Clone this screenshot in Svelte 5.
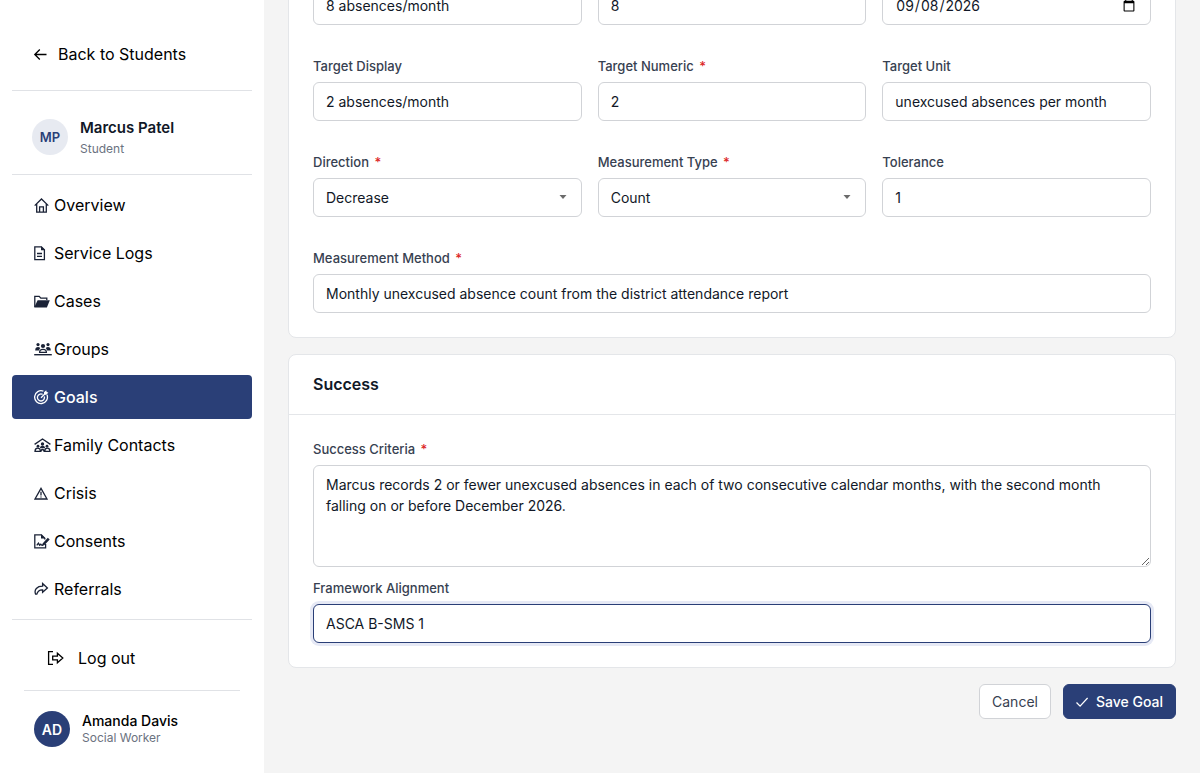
<script lang="ts">
	let active = 'goals';

	const navItems = [
		{ id: 'overview', label: 'Overview' },
		{ id: 'logs', label: 'Service Logs' },
		{ id: 'cases', label: 'Cases' },
		{ id: 'groups', label: 'Groups' },
		{ id: 'goals', label: 'Goals' },
		{ id: 'family', label: 'Family Contacts' },
		{ id: 'crisis', label: 'Crisis' },
		{ id: 'consents', label: 'Consents' },
		{ id: 'referrals', label: 'Referrals' }
	];

	let goal = {
		baselineDisplay: '8 absences/month',
		baselineNumeric: '8',
		baselineDate: '2026-09-08',
		targetDisplay: '2 absences/month',
		targetNumeric: '2',
		targetUnit: 'unexcused absences per month',
		direction: 'Decrease',
		measurementType: 'Count',
		tolerance: '1',
		method: 'Monthly unexcused absence count from the district attendance report',
		criteria:
			'Marcus records 2 or fewer unexcused absences in each of two consecutive calendar months, with the second month falling on or before December 2026.',
		framework: 'ASCA B-SMS 1'
	};
</script>

<div class="layout">
	<aside class="sidebar">
		<a class="back" href="#students">
			<svg width="14" height="14" viewBox="0 0 14 14" class="line">
				<path d="M13.5 7.5H2M6.8 2.5l-5 5 5 5" />
			</svg>
			Back to Students
		</a>

		<div class="student">
			<span class="avatar light">MP</span>
			<div>
				<div class="student-name">Marcus Patel</div>
				<div class="student-role">Student</div>
			</div>
		</div>

		<nav>
			{#each navItems as item (item.id)}
				<a href="#{item.id}" class="nav-item" class:active={active === item.id}>
					<svg width="18" height="16" viewBox="0 0 18 16" class="line">
						{#if item.id === 'overview'}
							<path d="M.7 8.6 7.5 2l6.8 6.6M2.7 7v8.2h9.6V7M5.6 15V9.8h3.8V15" />
						{:else if item.id === 'logs'}
							<path d="M.8 1.8h6.6l3 3v9.8H.8zM3 8.5h5M3 11.3h5" />
							<path class="solid" d="M7 1.2v4h4z" />
						{:else if item.id === 'cases'}
							<path d="M.8 14V3.3h4.4l1.6 1.8h6v2" />
							<path class="solid" d="M3.6 7.2h12.2L12.9 14.6H.2z" />
						{:else if item.id === 'groups'}
							<g class="solid">
								<circle cx="4" cy="3.6" r="1.6" />
								<circle cx="14" cy="3.6" r="1.6" />
								<circle cx="9" cy="5" r="2.1" />
								<path d="M1.2 9.4c0-2.4 1.2-3.4 2.8-3.4 1 0 1.7.3 2.2.9L4.8 9.4zM16.8 9.4c0-2.4-1.2-3.4-2.8-3.4-1 0-1.7.3-2.2.9l1.4 2.5z" />
								<path d="M.2 13h17.6v1.4H.2z" />
							</g>
							<path d="M5.6 11.4c0-2.4 1.4-3 3.4-3s3.4.6 3.4 3z" />
						{:else if item.id === 'goals'}
							<path d="M9.4 2.2A6.4 6.4 0 1 0 13 5.8M8.6 5.4a3.5 3.5 0 1 0 1.7 2.1M7 8.7l4-4" />
							<path class="solid" d="M10 5.1V3.3l2.2-2 .5 1.7 1.7.5-2 2.2h-1.8z" />
						{:else if item.id === 'family'}
							<path d="M.6 7.4 8.5 2l7.9 5.4" />
							<g class="solid">
								<circle cx="8.5" cy="7" r="1.7" />
								<circle cx="4" cy="9.2" r="1.4" />
								<circle cx="13" cy="9.2" r="1.4" />
								<path d="M5.9 11.2c.2-1.7 1.2-2.4 2.6-2.4s2.4.7 2.6 2.4z" />
							</g>
							<path d="M1 14.4c0-2.4 1-3.2 2.7-3.2s2.6.8 2.6 3.2zM10.7 14.4c0-2.4 1-3.2 2.6-3.2s2.7.8 2.7 3.2zM7 14.8c0-1.6.4-2.3 1.5-2.3s1.5.7 1.5 2.3" />
						{:else if item.id === 'crisis'}
							<path d="M7 3.4 13 14H1zM7 6.8v3.6M7 11.4v1.2" />
						{:else if item.id === 'consents'}
							<path d="M11.6 11v3.8H.8V1.8h6.6l3.4 3.4v1.2M2.8 12.4l1.6-2.2 1.2 2 1.2-1 .8.9h1.6" />
							<path class="solid" d="M7 1.2v4.4h4.4zM13.8 4.8l1.9 1.7-5.2 5.6-2.5.8.6-2.5z" />
						{:else}
							<path d="M8.6 2.6 13.4 7l-4.8 4.2V8.8C5.6 8.6 3.8 9.6 2.8 13.2H1.6C-.2 8.6 3 5.2 8.6 5.2z" />
						{/if}
					</svg>
					{item.label}
				</a>
			{/each}
		</nav>

		<div class="footer">
			<button type="button" class="logout">
				<svg width="18" height="16" viewBox="0 0 18 16" class="line">
					<path d="M6 1.6H1.6v12.8H6M5.7 6.2h4.7V3.3L15.8 8l-5.4 4.7V9.8H5.7z" />
				</svg>
				Log out
			</button>
			<div class="user">
				<span class="avatar dark">AD</span>
				<div>
					<div class="user-name">Amanda Davis</div>
					<div class="user-role">Social Worker</div>
				</div>
			</div>
		</div>
	</aside>

	<!-- column-reverse keeps the scroll position at the end of the form -->
	<main>
		<form on:submit|preventDefault>
			<section class="card">
				<div class="card-body measure">
					<div class="field">
						<label for="baseline-display">Baseline Display</label>
						<input id="baseline-display" type="text" bind:value={goal.baselineDisplay} />
					</div>
					<div class="field">
						<label for="baseline-numeric">Baseline Numeric <span class="req">*</span></label>
						<input id="baseline-numeric" type="text" bind:value={goal.baselineNumeric} />
					</div>
					<div class="field">
						<label for="baseline-date">Baseline Date</label>
						<input id="baseline-date" type="date" bind:value={goal.baselineDate} />
					</div>
					<div class="field">
						<label for="target-display">Target Display</label>
						<input id="target-display" type="text" bind:value={goal.targetDisplay} />
					</div>
					<div class="field">
						<label for="target-numeric">Target Numeric <span class="req">*</span></label>
						<input id="target-numeric" type="text" bind:value={goal.targetNumeric} />
					</div>
					<div class="field">
						<label for="target-unit">Target Unit</label>
						<input id="target-unit" type="text" bind:value={goal.targetUnit} />
					</div>
					<div class="field">
						<label for="direction">Direction <span class="req">*</span></label>
						<div class="select">
							<select id="direction" bind:value={goal.direction}>
								<option>Decrease</option>
								<option>Increase</option>
							</select>
							<svg width="8" height="4" viewBox="0 0 8 4"><path d="M.5 0h7L4 4z" /></svg>
						</div>
					</div>
					<div class="field">
						<label for="type">Measurement Type <span class="req">*</span></label>
						<div class="select">
							<select id="type" bind:value={goal.measurementType}>
								<option>Count</option>
								<option>Percentage</option>
							</select>
							<svg width="8" height="4" viewBox="0 0 8 4"><path d="M.5 0h7L4 4z" /></svg>
						</div>
					</div>
					<div class="field">
						<label for="tolerance">Tolerance</label>
						<input id="tolerance" type="text" bind:value={goal.tolerance} />
					</div>
					<div class="field wide">
						<label for="method">Measurement Method <span class="req">*</span></label>
						<input id="method" type="text" bind:value={goal.method} />
					</div>
				</div>
			</section>

			<section class="card">
				<h2>Success</h2>
				<div class="card-body success">
					<div class="field">
						<label for="criteria">Success Criteria <span class="req">*</span></label>
						<textarea id="criteria" rows="4" bind:value={goal.criteria}></textarea>
					</div>
					<div class="field">
						<label for="framework">Framework Alignment</label>
						<input id="framework" class="current" type="text" bind:value={goal.framework} />
					</div>
				</div>
			</section>

			<div class="actions">
				<button type="button" class="btn">Cancel</button>
				<button type="submit" class="btn primary">
					<svg width="12" height="12" viewBox="0 0 12 12" class="line">
						<path d="m.5 6.5 3.6 3.6L11.6 2" />
					</svg>
					Save Goal
				</button>
			</div>
		</form>
	</main>
</div>

<style>
	:global(body) {
		margin: 0;
		background: #f4f4f4;
	}
	.layout {
		display: flex;
		height: 100vh;
		font-family: Inter, 'Liberation Sans', sans-serif;
		font-size: 14px;
		color: #111827;
	}
	.layout * {
		box-sizing: border-box;
	}
	svg {
		flex: none;
		fill: currentColor;
	}
	.line {
		fill: none;
		stroke: currentColor;
		stroke-width: 1.3;
	}
	.solid {
		fill: currentColor;
		stroke: none;
	}
	.sidebar {
		flex: none;
		display: flex;
		flex-direction: column;
		width: 264px;
		padding: 18px 12px 0;
		background: #fff;
	}
	.back {
		display: flex;
		align-items: center;
		gap: 11px;
		height: 73px;
		padding-left: 21px;
		border-bottom: 1px solid #e0e2e6;
		font-size: 16px;
		color: #000;
		text-decoration: none;
	}
	.student {
		display: flex;
		align-items: center;
		gap: 12px;
		height: 84px;
		padding: 8px 20px 0;
		border-bottom: 1px solid #e0e2e6;
	}
	.avatar {
		display: flex;
		align-items: center;
		justify-content: center;
		width: 36px;
		height: 36px;
		border-radius: 50%;
		font-weight: 600;
	}
	.avatar.light {
		background: #e7eaf1;
		color: #2a3f77;
		font-size: 13px;
	}
	.avatar.dark {
		background: #2a3f77;
		color: #fff;
	}
	.student-name {
		padding-top: 2px;
		font-size: 15px;
		font-weight: 600;
		line-height: 22px;
	}
	.student-role {
		font-size: 12px;
		line-height: 20px;
		color: #6b7280;
	}
	nav {
		display: flex;
		flex-direction: column;
		gap: 4px;
		padding: 8px 0;
		border-bottom: 1px solid #e0e2e6;
	}
	.nav-item {
		display: flex;
		align-items: center;
		gap: 2px;
		height: 44px;
		padding-left: 22px;
		border-radius: 4px;
		font-size: 16px;
		color: #000;
		text-decoration: none;
	}
	.nav-item svg {
		color: #1a2236;
	}
	.nav-item.active {
		background: #2a3f77;
		color: #fff;
		font-weight: 500;
	}
	.nav-item.active svg {
		color: #fff;
	}
	.footer {
		padding: 6px 12px 0;
	}
	.logout {
		display: flex;
		align-items: center;
		gap: 13px;
		width: 100%;
		height: 65px;
		padding: 0 0 0 23px;
		border: 0;
		border-bottom: 1px solid #e0e2e6;
		background: none;
		font: inherit;
		font-size: 16px;
		color: #000;
	}
	.user {
		display: flex;
		align-items: center;
		gap: 12px;
		padding: 20px 10px;
	}
	.user-name {
		font-weight: 500;
		line-height: 17px;
		color: #000;
	}
	.user-role {
		font-size: 12px;
		line-height: 17px;
		color: #6b7280;
	}
	main {
		flex: 1;
		display: flex;
		flex-direction: column-reverse;
		min-width: 0;
		padding: 0 24px;
		overflow-y: auto;
		scrollbar-width: none;
	}
	form {
		display: flex;
		flex-direction: column;
		gap: 16px;
		padding: 24px 0 54px;
	}
	.card {
		border: 1px solid #e4e6e9;
		border-radius: 8px;
		background: #fff;
	}
	h2 {
		margin: 0;
		padding: 18px 24px;
		border-bottom: 1px solid #e4e6e9;
		font-size: 16px;
		font-weight: 600;
		line-height: 23px;
	}
	.card-body {
		display: grid;
		padding: 24px;
	}
	.measure {
		grid-template-columns: repeat(3, 1fr);
		gap: 31px 16px;
	}
	.success {
		gap: 11px;
	}
	.wide {
		grid-column: 1 / -1;
	}
	.field {
		display: flex;
		flex-direction: column;
		gap: 6px;
		min-width: 0;
	}
	label {
		font-size: 13px;
		font-weight: 500;
		line-height: 20px;
		color: #374151;
	}
	.req {
		margin-left: 2px;
		color: #dc2626;
	}
	input,
	select,
	textarea {
		display: block;
		width: 100%;
		height: 39px;
		padding: 8px 12px;
		border: 1px solid #d1d3d7;
		border-radius: 6px;
		background: #fff;
		font: inherit;
		line-height: 21px;
		color: #111827;
		outline: none;
	}
	textarea {
		height: 102px;
		resize: vertical;
	}
	select {
		appearance: none;
	}
	.select {
		position: relative;
	}
	.select svg {
		position: absolute;
		top: 17px;
		right: 15px;
		color: #6b6b6b;
		pointer-events: none;
	}
	input:focus,
	input.current {
		border-color: #2a3f77;
		box-shadow: 0 0 0 3px #e6e9f5;
	}
	.actions {
		display: flex;
		justify-content: flex-end;
		gap: 12px;
	}
	.btn {
		display: flex;
		align-items: center;
		gap: 8px;
		height: 35px;
		padding: 0 12px;
		border: 1px solid #d1d3d7;
		border-radius: 6px;
		background: #fff;
		font: inherit;
		color: #374151;
	}
	.btn.primary {
		border-color: #2a3f77;
		background: #2a3f77;
		font-weight: 500;
		color: #fff;
	}
</style>
